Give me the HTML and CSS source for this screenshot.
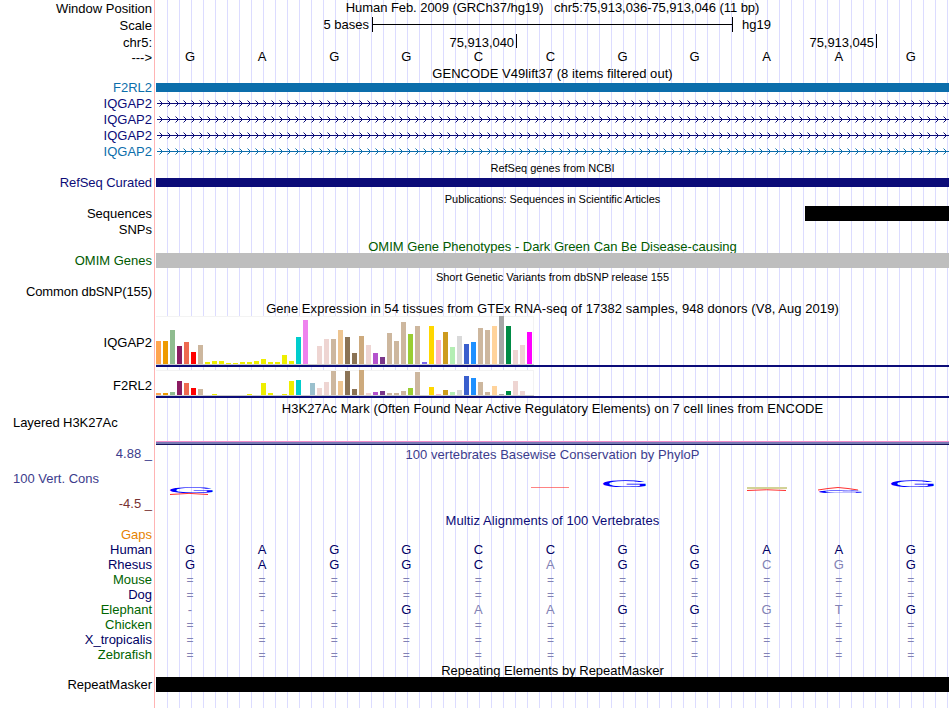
FILE: index.html
```html
<!DOCTYPE html>
<html lang="en">
<head>
    <meta charset="UTF-8">
    <meta name="viewport" content="width=device-width, initial-scale=1.0">
    <title>Human chr5:75,913,036-75,913,046</title>
    <link rel="stylesheet" href="styles.css">
</head>
<body>
    <div class="browser">
        <div class="row window">
            <div class="label">Window Position</div>
            <div class="title">Human Feb. 2009 (GRCh37/hg19) &nbsp; chr5:75,913,036-75,913,046 (11 bp)</div>
        </div>
        <div class="row scale">
            <div class="label">Scale</div>
            <div class="scale-body">
                <span class="scale-size">5 bases</span>
                <span class="ruler"></span>
                <span>hg19</span>
            </div>
        </div>
        <div class="row coords">
            <div class="label">chr5:</div>
            <div class="ticks"><span>75,913,040</span><span>75,913,045</span></div>
        </div>
        <div class="row">
            <div class="label">---&gt;</div>
            <div class="bases top-bases" data-seq="GAGGCCGGAAG"></div>
        </div>

        <!-- genes -->
        <div class="row title-row gencode"><div class="title">GENCODE V49lift37 (8 items filtered out)</div></div>
        <div class="row blue">
            <div class="label">F2RL2</div>
            <div class="bar"></div>
        </div>
        <div class="row navy"><div class="label">IQGAP2</div><svg class="intron" width="793" height="16"><rect class="shaft" x="1" y="7" width="792" height="1"/><rect width="793" height="16" fill="url(#chevron-navy)"/></svg></div>
        <div class="row navy"><div class="label">IQGAP2</div><svg class="intron" width="793" height="16"><rect class="shaft" x="1" y="7" width="792" height="1"/><rect width="793" height="16" fill="url(#chevron-navy)"/></svg></div>
        <div class="row navy"><div class="label">IQGAP2</div><svg class="intron" width="793" height="16"><rect class="shaft" x="1" y="7" width="792" height="1"/><rect width="793" height="16" fill="url(#chevron-navy)"/></svg></div>
        <div class="row blue"><div class="label">IQGAP2</div><svg class="intron" width="793" height="16"><rect class="shaft" x="1" y="7" width="792" height="1"/><rect width="793" height="16" fill="url(#chevron-blue)"/></svg></div>

        <div class="row title-row small"><div class="title">RefSeq genes from NCBI</div></div>
        <div class="row navy refseq">
            <div class="label">RefSeq Curated</div>
            <div class="bar"></div>
        </div>

        <!-- literature and variants -->
        <div class="row title-row small pubs"><div class="title">Publications: Sequences in Scientific Articles</div></div>
        <div class="row">
            <div class="label">Sequences</div>
            <div class="bar thick partial"></div>
        </div>
        <div class="row"><div class="label">SNPs</div></div>
        <div class="row title-row low omim"><div class="title">OMIM Gene Phenotypes - Dark Green Can Be Disease-causing</div></div>
        <div class="row omim">
            <div class="label">OMIM Genes</div>
            <div class="bar thick gray"></div>
        </div>
        <div class="row title-row small low"><div class="title">Short Genetic Variants from dbSNP release 155</div></div>
        <div class="row dbsnp"><div class="label">Common dbSNP(155)</div></div>

        <!-- expression -->
        <div class="row gtex-title"><div class="title">Gene Expression in 54 tissues from GTEx RNA-seq of 17382 samples, 948 donors (V8, Aug 2019)</div></div>
        <div class="row gtex gtex-tall">
            <div class="label">IQGAP2</div>
            <div class="gtex-body"><div class="chart" data-values="23,23,34,18,22,12,19,2,3,3,1,1,2,2,3,5,2,2,9,3,27,44,0,18,25,25,34,27,11,28,19,11,7,31,23,42,30,38,2,38,24,32,17,28,20,22,36,34,38,48,38,14,19,32"></div></div>
        </div>
        <div class="row gtex gtex-short">
            <div class="label">F2RL2</div>
            <div class="gtex-body"><div class="chart" data-values="2,2,3,14,12,7,6,0,1,0,0,0,0,1,0,12,2,0,1,14,15,0,12,7,13,24,14,24,6,25,2,3,4,2,2,4,7,23,0,8,1,5,3,5,19,17,13,3,9,1,4,14,4,0"></div></div>
        </div>
        <div class="row h3k-title"><div class="title">H3K27Ac Mark (Often Found Near Active Regulatory Elements) on 7 cell lines from ENCODE</div></div>
        <div class="row h3k">
            <div class="label left">Layered H3K27Ac</div>
            <div class="signal"></div>
        </div>

        <!-- conservation -->
        <div class="row cons">
            <div class="cons-labels">
                <div class="label">4.88 _</div>
                <div class="label left">100 Vert. Cons</div>
                <div class="label negative">-4.5 _</div>
            </div>
            <div>
                <div class="title">100 vertebrates Basewise Conservation by PhyloP</div>
                <svg class="logo" width="793" height="49">
                    <text class="g" transform="translate(10.8 27.9) scale(6.5 .83)">G</text>
                    <path class="red" d="M14 29.5 Q33 27.3 52 29.5"/>
                    <path class="red faint" d="M375 22.5 H413"/>
                    <text class="g" transform="translate(443.8 21.8) scale(6.5 .96)">G</text>
                    <path class="olive" d="M591 23 H631"/>
                    <path class="red" d="M591 25.5 Q611 24 630 25.5"/>
                    <path class="red" d="M662 25 L672 23.5 Q682 21.5 692 23.5 L702 25"/>
                    <text class="g" transform="translate(659.8 27.8) scale(6.5 .38)">G</text>
                    <text class="g" transform="translate(731.8 21.8) scale(6.5 .96)">G</text>
                </svg>
            </div>
        </div>

        <!-- alignments -->
        <div class="row multiz-title navy"><div class="title">Multiz Alignments of 100 Vertebrates</div></div>
        <div class="row align gaps"><div class="label">Gaps</div></div>
        <div class="row align"><div class="label">Human</div><div class="bases" data-seq="GAGGCCGGAAG"></div></div>
        <div class="row align"><div class="label">Rhesus</div><div class="bases" data-seq="GAGGCaGGcgG"></div></div>
        <div class="row align green"><div class="label">Mouse</div><div class="bases" data-seq="==========="></div></div>
        <div class="row align"><div class="label">Dog</div><div class="bases" data-seq="==========="></div></div>
        <div class="row align green"><div class="label">Elephant</div><div class="bases" data-seq="---GaaGGgtG"></div></div>
        <div class="row align green"><div class="label">Chicken</div><div class="bases" data-seq="==========="></div></div>
        <div class="row align"><div class="label">X_tropicalis</div><div class="bases" data-seq="==========="></div></div>
        <div class="row align green"><div class="label">Zebrafish</div><div class="bases" data-seq="==========="></div></div>

        <div class="row title-row low"><div class="title">Repeating Elements by RepeatMasker</div></div>
        <div class="row">
            <div class="label">RepeatMasker</div>
            <div class="bar thick"></div>
        </div>
    </div>

    <svg class="defs" width="0" height="0">
        <defs>
            <pattern id="chevron-navy" width="8" height="16" patternUnits="userSpaceOnUse">
                <path d="M3.5 4.5 L6.5 7.5 L3.5 10.5" fill="none" stroke="#0c0c78"/>
            </pattern>
            <pattern id="chevron-blue" width="8" height="16" patternUnits="userSpaceOnUse">
                <path d="M3.5 4.5 L6.5 7.5 L3.5 10.5" fill="none" stroke="#0c6eab"/>
            </pattern>
        </defs>
    </svg>

    <script>
        // One color per tissue
        const tissueColors = [
            '#FFA54F', '#EE9A00', '#8FBC8F', '#8B1C62', '#EE6A50', '#FF0000', '#CDB79E',
            '#EEEE00', '#EEEE00', '#EEEE00', '#EEEE00', '#EEEE00', '#EEEE00', '#EEEE00',
            '#EEEE00', '#EEEE00', '#EEEE00', '#EEEE00', '#EEEE00', '#EEEE00',
            '#00CDCD', '#EE82EE', '#9AC0CD', '#EED5D2', '#EED5D2', '#CDB79E', '#EEC591',
            '#8B7355', '#8B7355', '#CDAA7D', '#EED5D2', '#B452CD', '#7A378B', '#CDB79E',
            '#CDB79E', '#CDB79E', '#9ACD32', '#CDB79E', '#7A67EE', '#FFD700', '#FFB6C1',
            '#CD9B1D', '#B4EEB4', '#D9D9D9', '#3A5FCD', '#1E90FF', '#CDB79E', '#CDB79E',
            '#FFD39B', '#A6A6A6', '#008B45', '#EED5D2', '#EED5D2', '#FF00FF'
        ];

        document.querySelectorAll('.chart').forEach(function(chart) {
            chart.dataset.values.split(',').forEach(function(value, i) {
                const bar = document.createElement('span');
                bar.style.height = value + 'px';
                bar.style.backgroundColor = tissueColors[i];
                chart.appendChild(bar);
            });
        });

        // Lower case bases and gaps differ from human, drawn lighter
        document.querySelectorAll('.bases').forEach(function(row) {
            row.dataset.seq.split('').forEach(function(base) {
                const cell = document.createElement('span');
                cell.textContent = base.toUpperCase();
                if (!/[A-Z]/.test(base)) {
                    cell.className = 'mismatch';
                }
                if (base === '=') {
                    cell.classList.add('unaligned');
                }
                row.appendChild(cell);
            });
        });
    </script>
</body>
</html>
```
FILE: styles.css
```css
body {
    margin: 0;
    background-color: white;
    color: black;
    font-family: "Liberation Sans", Arial, Helvetica, sans-serif;
    font-size: 13px;
}
.browser {
    width: 950px;
    height: 708px;
    overflow: hidden;
    background:
        linear-gradient(#ffb4b4, #ffb4b4) 154px 0 / 1px 100% no-repeat,
        repeating-linear-gradient(to right, #dcdcff 0 1px, transparent 1px 12px) 167px 0 / 782px 100% no-repeat;
}
.row {
    display: grid;
    grid-template-columns: 152px 793px;
    grid-template-rows: 100%;
    column-gap: 4px;
    height: 16px;
    line-height: 16px;
    white-space: nowrap;
}
.label {
    text-align: right;
}
.label.left {
    text-align: left;
    padding-left: 13px;
}
.title {
    grid-column: 2;
    text-align: center;
}
.title-row {
    height: 15px;
}
.gencode {
    height: 14px;
    letter-spacing: 0.05px;
}
.small {
    font-size: 11px;
}
.pubs {
    letter-spacing: -0.05px;
}
.low {
    line-height: 18px;
}
.small.low {
    line-height: 17px;
}
.navy {
    color: #0c0c78;
}
.blue {
    color: #0c6eab;
}
.omim {
    color: #005a00;
}
.refseq {
    letter-spacing: -0.07px;
}
.dbsnp {
    letter-spacing: -0.11px;
}
.window {
    line-height: 18px;
}
.window .title {
    line-height: 15px;
    letter-spacing: -0.06px;
}

/* scale and coordinates */
.scale {
    height: 18px;
    line-height: 18px;
}
.scale .label {
    line-height: 20px;
}
.scale-body {
    display: flex;
}
.scale-size {
    width: 213px;
    text-align: right;
}
.ruler {
    width: 359px;
    height: 15px;
    margin: 1px 9px 0 3px;
    border: solid black;
    border-width: 0 1px;
    background: linear-gradient(black, black) 0 7px / 100% 1px no-repeat;
}
.coords {
    line-height: 18px;
}
.ticks {
    display: flex;
    line-height: 18px;
    letter-spacing: -0.06px;
}
.ticks span {
    box-sizing: border-box;
    width: 360px;
    height: 14px;
    padding-right: 2px;
    border-right: 1px solid black;
    text-align: right;
}
.ticks span:first-child {
    width: 361px;
}

/* items */
.bar {
    height: 9px;
    margin-top: 3px;
    background-color: currentColor;
}
.bar.thick {
    height: 15px;
    margin-top: 0;
}
.bar.partial {
    margin-left: 649px;
}
.bar.gray {
    background-color: #bebebe;
}
.intron {
    display: block;
}
.shaft {
    fill: currentColor;
}
.defs {
    display: block;
}

/* bases */
.bases {
    display: flex;
    margin-left: -2px;
}
.bases span {
    width: 72.09px;
    text-align: center;
}
.top-bases {
    line-height: 13px;
}
.align {
    height: 15px;
    line-height: 15px;
    color: #000064;
}
.align.green .label {
    color: #006400;
}
.align.gaps {
    color: #e68200;
}
.bases .mismatch {
    color: #8282b4;
}
.bases .unaligned {
    font-size: 12px;
    line-height: 17px;
}
.multiz-title {
    height: 13px;
    line-height: 14px;
    letter-spacing: 0.08px;
}

/* expression */
.gtex-title {
    line-height: 18px;
    letter-spacing: 0.06px;
}
.gtex-tall {
    height: 51px;
    line-height: 53px;
    margin-bottom: 3px;
}
.gtex-short {
    height: 28px;
    line-height: 31px;
}
.gtex-body {
    box-sizing: border-box;
    height: 100%;
    border-bottom: 2px solid #0c0c78;
}
.chart {
    box-sizing: border-box;
    display: flex;
    align-items: flex-end;
    gap: 2px;
    width: 378px;
    height: 100%;
    border-bottom: 1px solid #cccccc;
    background-color: white;
    box-shadow: inset 0 1px #f3f3f3, inset -1px 0 #f3f3f3;
}
.chart span {
    width: 5px;
}
.h3k-title {
    height: 17px;
    line-height: 22px;
    letter-spacing: 0.045px;
}
.h3k {
    height: 30px;
}
.h3k .label {
    letter-spacing: -0.06px;
}
.signal {
    align-self: end;
    box-sizing: border-box;
    height: 4px;
    border-top: 1px solid #f08cc8;
    border-bottom: 1px solid #14145a;
    background-color: #7878b4;
}

/* conservation */
.cons {
    height: 69px;
    color: #3c3c8c;
    line-height: 20px;
}
.cons .title {
    letter-spacing: 0.04px;
}
.cons-labels {
    display: flex;
    flex-direction: column;
    gap: 7px;
    line-height: 18px;
}
.negative {
    color: #783232;
}
.logo {
    display: block;
}
.logo .g {
    font-size: 10px;
    fill: blue;
    text-rendering: geometricPrecision;
}
.logo path {
    fill: none;
}
.logo .red {
    stroke: #ff3030;
}
.logo .faint {
    opacity: 0.6;
}
.logo .olive {
    stroke: #d2d296;
    stroke-width: 2;
}
```
